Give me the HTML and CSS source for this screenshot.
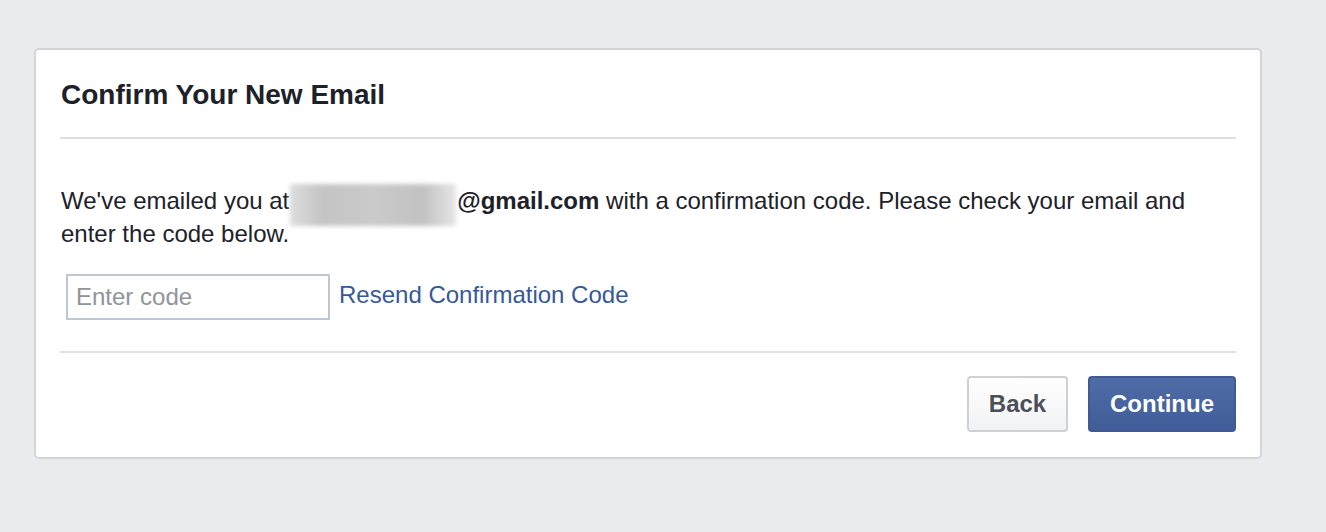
FILE: index.html
```html
<!DOCTYPE html>
<html lang="en">
<head>
  <meta charset="UTF-8">
  <title>Confirm Your New Email</title>
  <link rel="stylesheet" href="styles.css">
</head>
<body>

  <div class="card">
    <div class="card-head">
      <h2>Confirm Your New Email</h2>
    </div>

    <div class="card-body">
      <p class="note">We've emailed you at<span class="hidden-name"></span><b>@gmail.com</b> with a confirmation code. Please check your email and enter the code below.</p>
      <div class="code-row">
        <input type="text" class="code-input" placeholder="Enter code">
        <a href="#" class="resend">Resend Confirmation Code</a>
      </div>
    </div>

    <div class="card-foot">
      <button class="btn btn-back">Back</button>
      <button class="btn btn-continue">Continue</button>
    </div>
  </div>

</body>
</html>
```

FILE: styles.css
```css
body {
  margin: 0;
  background-color: #e9ebee;
  font-family: 'Liberation Sans', Arial, sans-serif;
  color: #1d2129;
}

.card {
  width: 1176px;
  margin: 48px 0 0 34px;
  padding: 0 24px;
  background-color: #fff;
  border: 2px solid #d3d5d9;
  border-radius: 5px;
}

.card-head {
  padding: 29px 0 26px 1px;
  border-bottom: 2px solid #dddfe2;
}

h2 {
  margin: 0;
  font-size: 28px;
  line-height: 32px;
  font-weight: bold;
}

.card-body {
  padding: 45px 0 31px 1px;
  border-bottom: 2px solid #dddfe2;
}

.note {
  margin: 0;
  font-size: 24px;
  line-height: 33px;
}

/* blurred-out address, kept out of the line height */
.hidden-name {
  display: inline-block;
  width: 166px;
  height: 42px;
  margin: 0 1px -9px;
  vertical-align: top;
  background: linear-gradient(90deg, #ddd, #c4c4c4 20%, #cacaca 50%, #c2c2c2 80%, #e6e6e6);
  filter: blur(2px);
}

.code-row {
  display: flex;
  align-items: center;
  margin-top: 24px;
  margin-left: 5px;
}

.code-input {
  width: 264px;
  height: 46px;
  box-sizing: border-box;
  padding: 0 8px;
  border: 2px solid #bdc7d8;
  font-family: inherit;
  font-size: 24px;
  color: #1d2129;
  outline: none;
}

.code-input::placeholder {
  color: #90949c;
}

.resend {
  margin-left: 9px;
  margin-top: -5px;
  font-size: 24px;
  color: #365899;
  text-decoration: none;
}

.card-foot {
  display: flex;
  justify-content: flex-end;
  gap: 20px;
  padding: 23px 0 25px;
}

.btn {
  height: 56px;
  box-sizing: border-box;
  border-radius: 4px;
  font-family: inherit;
  font-size: 24px;
  font-weight: bold;
  cursor: pointer;
}

.btn-back {
  width: 101px;
  background: linear-gradient(#fff, #f1f2f4);
  border: 2px solid #ced0d4;
  color: #4b4f56;
}

.btn-continue {
  width: 148px;
  background: linear-gradient(#506ca6, #405d99);
  border: 2px solid #3f5a94;
  color: #fff;
}
```
